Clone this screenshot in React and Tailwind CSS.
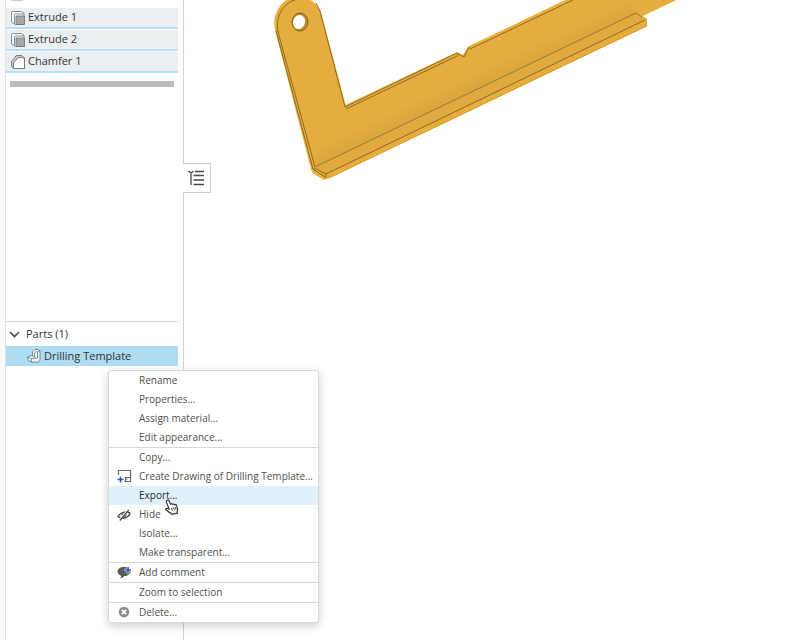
const features = [
  { name: 'Extrude 1', Icon: ExtrudeIcon },
  { name: 'Extrude 2', Icon: ExtrudeIcon },
  { name: 'Chamfer 1', Icon: ChamferIcon },
]

const menuGroups = [
  [
    { label: 'Rename' },
    { label: 'Properties...' },
    { label: 'Assign material...' },
    { label: 'Edit appearance...' },
  ],
  [
    { label: 'Copy...' },
    { label: 'Create Drawing of Drilling Template...', Icon: DrawingIcon },
    { label: 'Export...', active: true },
    { label: 'Hide', Icon: HideIcon },
    { label: 'Isolate...' },
    { label: 'Make transparent...' },
  ],
  [{ label: 'Add comment', Icon: CommentIcon }],
  [{ label: 'Zoom to selection' }],
  [{ label: 'Delete...', Icon: DeleteIcon }],
]

function ExtrudeIcon() {
  return (
    <svg width="14" height="14" viewBox="0 0 14 14" fill="none" stroke="#707376" strokeWidth=".8" aria-hidden="true">
      <path d="M4.500 13.500L.5 11V1.500q0-1 1-1h9l2.500 2v11z" fill="#f7f8f9" />
      <path d="M3.500 12.500V4q0-1 1-1H13" />
      <path d="M5 5h8.500v8.500H5z" fill="#a5a7aa" />
    </svg>
  )
}

function ChamferIcon() {
  return (
    <svg width="14" height="14" viewBox="0 0 14 14" fill="none" stroke="#707376" strokeWidth=".9" aria-hidden="true">
      <path d="M.5 6.500l5-6h5.500l2.500 2.500v10.500H2.500l-2-2z" fill="#c4c7ca" />
      <path d="M2.500 13.500V8l5-5.500h4l2 1.500v9.500z" fill="#fff" />
    </svg>
  )
}

function PartIcon() {
  return (
    <svg width="14" height="14" viewBox="0 0 14 14" fill="none" stroke="#5f7480" strokeWidth=".8" aria-hidden="true">
      <path d="M5.500 7V3l2.500-2.500h3l2 1.500v9.500l-2 1.500H4L.8 10.500V8l2-1.200z" fill="#eef6fa" />
      <path d="M.8 8l3.500 1.800L10.500 9V3l2.500-1M4.500 9.800v3M5.500 7l2 1.500V4.200L10 2" />
    </svg>
  )
}

function DrawingIcon() {
  return (
    <svg width="15" height="15" viewBox="0 0 15 15" fill="none" stroke="#666" aria-hidden="true">
      <path d="M1.500 6V1.500h12v11H7.500M8.500 12V8.500h5M8.500 10h2" strokeWidth="1.200" />
      <path d="M3.500 7.500v6M.5 10.500h6" stroke="#1e5cb8" strokeWidth="1.600" />
    </svg>
  )
}

function HideIcon() {
  return (
    <svg width="14" height="12" viewBox="0 0 14 12" fill="none" stroke="#4a4a4a" aria-hidden="true">
      <path d="M1 7.500C3 3.500 9 1.500 13 4.200 12 8.500 5.500 11 1 7.500z" strokeWidth="1.400" />
      <ellipse cx="7" cy="6" rx="2" ry="2.200" />
      <path d="M2.300 11.500L11.200.8" stroke="#fff" strokeWidth="2" />
      <path d="M2.800 11.500L11.800.8" strokeWidth="1.300" />
    </svg>
  )
}

function CommentIcon() {
  return (
    <svg width="15" height="13" viewBox="0 0 15 13" fill="none" aria-hidden="true">
      <path
        d="M7 1c3.800 0 6.500 1.900 6.500 4.500S10.700 10 7.300 10c-1.200 1.400-2.300 2-4.100 2.200.7-.8 1-1.600.9-2.500C2 9 .5 7.600.5 5.500.5 2.900 3.200 1 7 1z"
        fill="#5a5a5a"
      />
      <path d="M11 .5v7M7.500 4h7.500" stroke="#fff" strokeWidth="2.600" />
      <path d="M11 1v6M8 4h6" stroke="#2f56cc" strokeWidth="1.600" />
    </svg>
  )
}

function DeleteIcon() {
  return (
    <svg width="12" height="13" viewBox="0 0 12 13" fill="none" aria-hidden="true">
      <circle cx="6" cy="6" r="5.200" fill="#8a8a8a" />
      <path d="M3.800 3.800l4.400 4.400M8.200 3.800L3.800 8.200" stroke="#fff" strokeWidth="1.700" />
    </svg>
  )
}

function ListIcon() {
  return (
    <svg width="16" height="16" viewBox="0 0 16 16" fill="none" stroke="#4a4a4a" aria-hidden="true">
      <path d="M.5 1l2.500 2.200L5.500 1M3 4v11M7 1.500h9M5.500 5.500H16M5.500 10H16M5.500 14.500H16" strokeWidth="1.300" />
    </svg>
  )
}

function HandCursor() {
  return (
    <svg width="14" height="16" viewBox="0 0 14 16" aria-hidden="true">
      <path
        d="M2.200 1.200c.9-.5 1.700 0 2 .8l1.300 3.200c.6-.7 1.500-.6 2 .1.700-.5 1.600-.3 2 .4.9-.4 1.700 0 2 .9l1 3c.3 1.500 0 2.300-.4 3.200l.2 1.400-6 1.100-.6-1.200C3.900 13.400 2.700 12 .9 10.700c-.5-.8.2-1.700 1.200-1.400l2 .8-2.600-7c-.2-.8 0-1.500.7-1.900z"
        fill="#fff"
        stroke="#333"
        strokeWidth="1.200"
      />
      <path d="M6.500 8.800l.8 2.800M8.500 8.300l.8 2.800M10.400 8l.7 2.600" stroke="#333" strokeWidth=".9" />
    </svg>
  )
}

function PartModel() {
  return (
    <svg className="shrink-0" width="440" height="190" viewBox="260 0 440 190" fill="none" role="img" aria-label="Drilling Template">
      <defs>
        <linearGradient id="bend" gradientUnits="userSpaceOnUse" x1="454" y1="82" x2="463" y2="101">
          <stop offset="0" stopColor="#e5ad40" />
          <stop offset="1" stopColor="#d7a33d" />
        </linearGradient>
      </defs>
      <path
        d="M276 31C272 15 281 0 295-2c13-2 23 6 26 17l24 91 112-53 6 3 6-9L569-1h108l-36 17 5 3v7l-319 152-3 1-10-6-2-3z"
        fill="#e5ad40"
        stroke="#efae35"
        strokeWidth="1.500"
        strokeLinejoin="round"
      />
      <path d="M318 148L628-1l8 14-321 154z" fill="url(#bend)" />
      <path d="M315 167L636 13l9 7-319 154z" fill="#e0aa41" />
      <g stroke="#80621f" strokeWidth=".9">
        <path d="M278 32C275 17 283 3 295 0M278 32l37 135M276 31l37 138 12 8M314 168l12 6v4M326 174L645 20" />
        <path d="M315 167L636 13l6 4" strokeWidth=".7" />
        <path d="M316 3l4 8 25 96 112-54M346 109l111-53 2-1M457 53l7 4 5-10M470 49L573 0" />
      </g>
      <path d="M329 178L646 26v-6" stroke="#d39a2d" />
      <ellipse cx="300" cy="22" rx="8" ry="9" fill="#c18d2e" stroke="#80621f" />
      <ellipse cx="299" cy="22" rx="6" ry="7" fill="#fff" transform="rotate(18 299 22)" />
    </svg>
  )
}

function ContextMenu() {
  return (
    <div
      role="menu"
      className="absolute left-[108px] top-[370px] min-w-[211px] rounded-[3px] border border-[#d8d8d8] bg-white text-[10px] text-[#505050] shadow-[0_3px_10px_rgba(0,0,0,0.2)]"
    >
      {menuGroups.map((group, index) => (
        <div key={index} role="group" className="border-b border-[#d8d8d8] last:border-b-0">
          {group.map(({ label, Icon, active }) => (
            <button
              key={label}
              type="button"
              role="menuitem"
              className={
                active
                  ? 'flex h-[19px] w-full items-center bg-[#e0f1fb] pr-1 text-left text-[#2b2b2b]'
                  : 'flex h-[19px] w-full items-center pr-1 text-left'
              }
            >
              <span className="flex w-[30px] shrink-0 justify-center">{Icon && <Icon />}</span>
              <span className="whitespace-nowrap">{label}</span>
            </button>
          ))}
        </div>
      ))}
    </div>
  )
}

export default function App() {
  return (
    <div className="relative flex min-h-screen overflow-hidden bg-white font-['Open_Sans',sans-serif] text-[11px] text-[#333]">
      <div className="w-[6px] shrink-0 border-r border-[#e0e0e0] bg-[#fafafa]" />
      <aside className="flex w-[178px] shrink-0 flex-col border-r border-[#d4d4d4] pr-[5px]">
        <div className="mb-[7px] ml-[5px] h-px w-3 bg-[#cfc9e8]" />
        <ul className="space-y-px">
          {features.map(({ name, Icon }) => (
            <li key={name} className="flex h-[21px] items-center gap-[3px] border-b-2 border-b-[#b4e1f6] bg-[#eceff2] pl-[5px]">
              <Icon />
              {name}
            </li>
          ))}
        </ul>
        <div className="mx-1 mt-2 h-[6px] bg-[#bdbdbd]" />
        <section className="mt-[234px] border-t border-[#d8d8d8]">
          <button type="button" className="flex h-6 w-full items-center gap-[6px] pl-[3px]">
            <svg width="11" height="7" viewBox="0 0 11 7" fill="none" aria-hidden="true">
              <path d="M1 1l4.500 4.500L10 1" stroke="#4a4a4a" strokeWidth="1.700" />
            </svg>
            Parts (1)
          </button>
          <div className="flex h-5 items-center gap-[3px] bg-[#aedcf3] pl-[21px]">
            <PartIcon />
            Drilling Template
          </div>
        </section>
      </aside>
      <main className="flex min-w-0 flex-1 items-start">
        <button
          type="button"
          aria-label="Show feature list"
          className="-ml-px mt-[163px] flex h-[30px] w-7 shrink-0 items-center justify-center border border-l-0 border-[#cfcfcf] bg-white pr-0.5"
        >
          <ListIcon />
        </button>
        <div className="ml-[49px]">
          <PartModel />
        </div>
      </main>
      <ContextMenu />
      <div className="pointer-events-none absolute left-[165px] top-[499px]">
        <HandCursor />
      </div>
    </div>
  )
}
